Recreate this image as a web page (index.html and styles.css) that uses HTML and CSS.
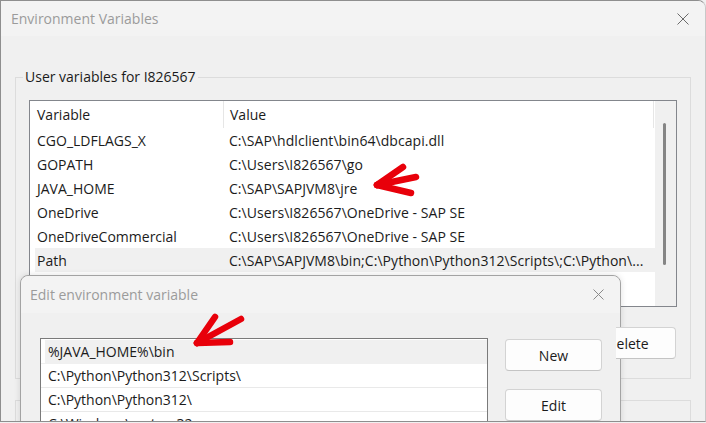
FILE: index.html
```html
<!DOCTYPE html>
<html>
<head>
<meta charset="utf-8">
<link rel="stylesheet" href="styles.css">
</head>
<body>
<div class="win">
  <div class="titlebar">
    <span class="title">Environment Variables</span>
    <svg class="close" width="12" height="12" viewBox="0 0 12 12"><path d="M0.5 0.5L11.5 11.5M11.5 0.5L0.5 11.5" stroke="#6a6a6a" stroke-width="1" fill="none"/></svg>
  </div>
  <div class="winbody">
    <fieldset class="group user">
      <legend>User variables for I826567</legend>
      <div class="listview">
        <div class="lv-main">
          <div class="lv-head"><div class="c1">Variable</div><div class="c2">Value</div></div>
          <div class="lv-row"><div class="c1">CGO_LDFLAGS_X</div><div class="c2">C:\SAP\hdlclient\bin64\dbcapi.dll</div></div>
          <div class="lv-row"><div class="c1">GOPATH</div><div class="c2">C:\Users\I826567\go</div></div>
          <div class="lv-row"><div class="c1">JAVA_HOME</div><div class="c2">C:\SAP\SAPJVM8\jre</div></div>
          <div class="lv-row"><div class="c1">OneDrive</div><div class="c2">C:\Users\I826567\OneDrive - SAP SE</div></div>
          <div class="lv-row"><div class="c1">OneDriveCommercial</div><div class="c2">C:\Users\I826567\OneDrive - SAP SE</div></div>
          <div class="lv-row sel"><div class="c1">Path</div><div class="c2">C:\SAP\SAPJVM8\bin;C:\Python\Python312\Scripts\;C:\Python\...</div></div>
        </div>
        <div class="scrollbar"><div class="thumb"></div></div>
      </div>
      <div class="btnrow">
        <button class="btn btn-delete">Delete</button>
      </div>
    </fieldset>
    <div class="group-system"></div>
  </div>

  <div class="dialog">
    <div class="d-titlebar">
      <span class="d-title">Edit environment variable</span>
      <svg class="d-close" width="11" height="11" viewBox="0 0 11 11"><path d="M0.5 0.5L10.5 10.5M10.5 0.5L0.5 10.5" stroke="#8a8a8a" stroke-width="1" fill="none"/></svg>
    </div>
    <div class="d-body">
      <div class="d-list">
        <div class="d-row sel">%JAVA_HOME%\bin</div>
        <div class="d-row">C:\Python\Python312\Scripts\</div>
        <div class="d-row">C:\Python\Python312\</div>
        <div class="d-row">C:\Windows\system32</div>
      </div>
      <div class="d-buttons">
        <button class="btn">New</button>
        <button class="btn">Edit</button>
      </div>
    </div>
  </div>

  <svg class="arrows" width="706" height="423" viewBox="0 0 706 423">
    <g stroke="#e8000a" stroke-width="6.5" stroke-linecap="round" stroke-linejoin="round" fill="none">
      <path d="M377 185 L403 167"/>
      <path d="M377 185 L416 177"/>
      <path d="M377 185 L411 193"/>
      <path d="M197 343 L215 317"/>
      <path d="M197 343 L241 319"/>
      <path d="M197 343 L230 342"/>
    </g>
  </svg>
</div>
</body>
</html>
```

FILE: styles.css
```css
html, body {
  margin: 0;
  padding: 0;
  background: #f0f0f0;
}
body {
  font-family: "Open Sans", "Noto Sans", sans-serif;
  font-size: 14px;
  color: #1b1b1b;
}
.win {
  position: relative;
  width: 706px;
  height: 422px;
  box-sizing: border-box;
  border: 1px solid #8e8e8e;
  border-right-color: #c8c8c8;
  border-top-right-radius: 8px;
  background: #f0f0f0;
  overflow: hidden;
}
.titlebar {
  height: 35px;
  background: #f3f3f3;
  display: flex;
  align-items: center;
  justify-content: space-between;
  padding: 0 16px 0 10px;
}
.title {
  color: #9b9b9b;
  font-size: 14px;
  line-height: 20px;
  margin-top: 1px;
}
.close {
  display: block;
}
.winbody {
  padding-top: 31px;
}
.group {
  margin: 0 14px;
  border: 1px solid #dcdcdc;
  padding: 13px 13px 19px 13px;
  min-width: 0;
}
.group legend {
  padding: 0 2px;
  margin-left: -6px;
  line-height: 20px;
  font-size: 14px;
  color: #1b1b1b;
}
.listview {
  height: 205px;
  border: 1px solid #83868c;
  background: #fff;
  display: flex;
}
.lv-main {
  flex: 1;
  padding-left: 5px;
  overflow: hidden;
}
.lv-head, .lv-row {
  display: flex;
  align-items: center;
  white-space: nowrap;
}
.lv-head {
  height: 27px;
  border-right: 1px solid #e6e6e6;
  margin-right: 1px;
}
.lv-head .c1 {
  border-right: 1px solid #e6e6e6;
  align-self: stretch;
  display: flex;
  align-items: center;
}
.lv-row {
  height: 24px;
}
.c1 {
  width: 186px;
  padding-left: 2px;
  flex: none;
}
.c2 {
  padding-left: 6px;
  overflow: hidden;
}
.lv-row .c2 {
  letter-spacing: 0.05px;
}
.lv-row.sel {
  background: #f0f0f0;
}
.scrollbar {
  width: 21px;
  background: #f0f0f0;
  flex: none;
}
.thumb {
  margin: 22px 0 0 8px;
  width: 3px;
  height: 142px;
  border-radius: 2px;
  background: #858585;
}
.btnrow {
  display: flex;
  justify-content: flex-end;
  margin-top: 20px;
  margin-right: 1px;
}
.btn {
  width: 97px;
  height: 32px;
  box-sizing: border-box;
  border: 1px solid #d3d3d3;
  border-bottom-color: #c4c4c4;
  border-radius: 4px;
  background: #fdfdfd;
  font-family: "Open Sans", "Noto Sans", sans-serif;
  font-size: 14px;
  color: #1b1b1b;
  padding: 0;
}
.btn-delete {
  position: relative;
  z-index: 3;
  clip-path: inset(-1px -1px -1px 37px);
}
.group-system {
  margin: 21px 14px 0;
  height: 120px;
  border: 1px solid #dcdcdc;
}
.dialog {
  position: absolute;
  left: 19px;
  top: 274px;
  width: 601px;
  height: 200px;
  box-sizing: border-box;
  border: 1px solid #a3a3a3;
  border-radius: 8px 8px 0 0;
  background: #f0f0f0;
  box-shadow: 0 0 6px rgba(0,0,0,0.12);
  z-index: 2;
}
.d-titlebar {
  height: 37px;
  background: #f3f3f3;
  border-radius: 8px 8px 0 0;
  display: flex;
  align-items: center;
  justify-content: space-between;
  padding: 0 16px 0 9px;
}
.d-title {
  color: #9b9b9b;
  font-size: 14px;
  line-height: 20px;
}
.d-close {
  display: block;
}
.d-body {
  display: flex;
  align-items: flex-start;
  padding: 25px 0 0 19px;
  gap: 17px;
}
.d-list {
  width: 448px;
  height: 120px;
  box-sizing: border-box;
  border: 1px solid #7a7a7a;
  background: #fff;
  padding-top: 1px;
}
.d-row {
  height: 23px;
  border-bottom: 1px solid #e9e9e9;
  display: flex;
  align-items: center;
  padding-left: 7px;
  white-space: nowrap;
}
.d-row.sel {
  background: linear-gradient(to right, #fff 4px, #f0f0f0 4px);
  border-bottom-color: #f0f0f0;
}
.d-buttons {
  display: flex;
  flex-direction: column;
  gap: 18px;
  margin-top: 1px;
}
.arrows {
  position: absolute;
  left: -1px;
  top: -1px;
  z-index: 5;
  pointer-events: none;
}
```
